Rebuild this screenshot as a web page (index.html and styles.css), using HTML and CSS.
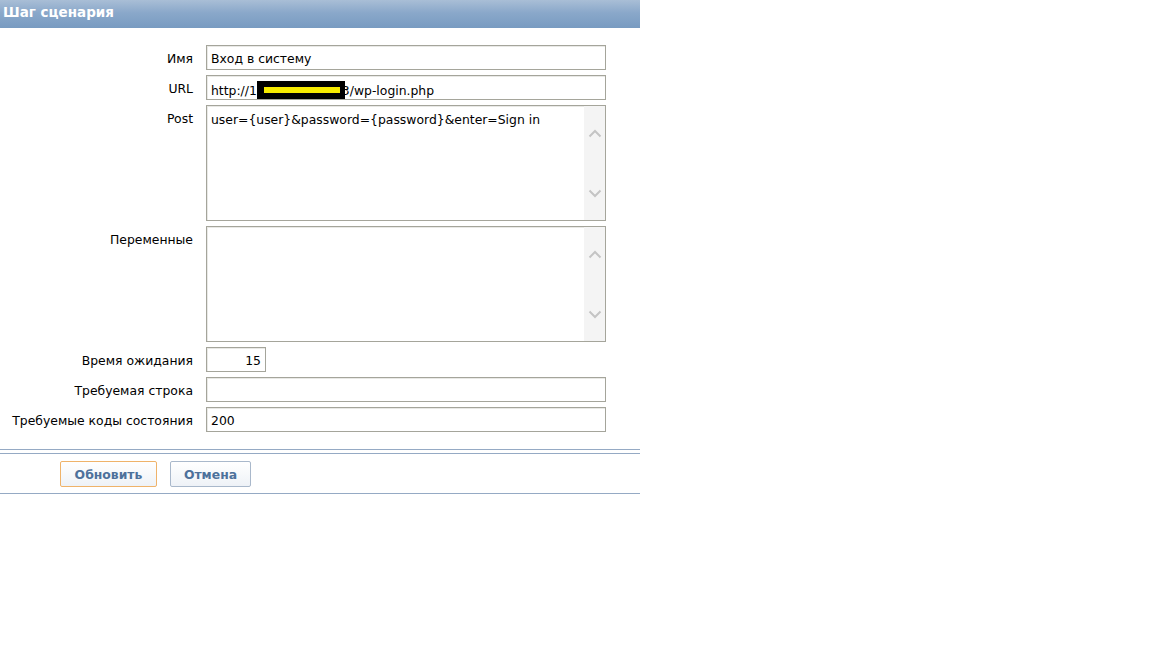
FILE: index.html
```html
<!DOCTYPE html>
<html lang="ru">
<head>
<meta charset="utf-8">
<title>Шаг сценария</title>
<link rel="stylesheet" href="styles.css">
</head>
<body>
<div class="panel">
  <div class="panel-head">Шаг сценария</div>
  <div class="form">
    <div class="label">Имя</div>
    <div class="field">Вход в систему</div>

    <div class="label">URL</div>
    <div class="field">http://1<span class="mask"><span class="mask-bar"></span></span>3/wp-login.php</div>

    <div class="label">Post</div>
    <div class="field area">
      <div class="area-text">user={user}&amp;password={password}&amp;enter=Sign in</div>
      <div class="scroll">
        <svg width="14" height="9" viewBox="0 0 14 9"><path d="M1.5 7.5 L7 2 L12.5 7.5" fill="none" stroke="#c4c4c4" stroke-width="2"/></svg>
        <svg width="14" height="9" viewBox="0 0 14 9"><path d="M1.5 1.5 L7 7 L12.5 1.5" fill="none" stroke="#c4c4c4" stroke-width="2"/></svg>
      </div>
    </div>

    <div class="label">Переменные</div>
    <div class="field area">
      <div class="area-text"></div>
      <div class="scroll">
        <svg width="14" height="9" viewBox="0 0 14 9"><path d="M1.5 7.5 L7 2 L12.5 7.5" fill="none" stroke="#c4c4c4" stroke-width="2"/></svg>
        <svg width="14" height="9" viewBox="0 0 14 9"><path d="M1.5 1.5 L7 7 L12.5 1.5" fill="none" stroke="#c4c4c4" stroke-width="2"/></svg>
      </div>
    </div>

    <div class="label">Время ожидания</div>
    <div class="field short">15</div>

    <div class="label">Требуемая строка</div>
    <div class="field"></div>

    <div class="label">Требуемые коды состояния</div>
    <div class="field">200</div>
  </div>
  <div class="footer">
    <button class="btn btn-main">Обновить</button>
    <button class="btn btn-cancel">Отмена</button>
  </div>
</div>
</body>
</html>
```

FILE: styles.css
```css
html, body {
  margin: 0;
  padding: 0;
  background: #ffffff;
}

body {
  font-family: "DejaVu Sans", Verdana, sans-serif;
  font-size: 12.4px;
  color: #000;
}

.panel {
  width: 640px;
}

.panel-head {
  height: 28px;
  box-sizing: border-box;
  padding: 4px 0 0 3px;
  background: linear-gradient(#a9bed6, #8aa8ca 45%, #789bc1);
  color: #ffffff;
  font-weight: bold;
  font-size: 13.5px;
  line-height: 17px;
}

.form {
  display: grid;
  grid-template-columns: 193px 400px;
  column-gap: 13px;
  row-gap: 5px;
  padding: 17px 0 17px;
}

.label {
  text-align: right;
  padding-top: 6px;
  line-height: 15px;
  white-space: nowrap;
}

.field {
  box-sizing: border-box;
  height: 25px;
  border: 1px solid #a5a59b;
  box-shadow: inset 1px 1px 0 #e9e9e6;
  padding: 5px 4px 0;
  line-height: 15px;
  white-space: nowrap;
  overflow: hidden;
}

.field.short {
  width: 60px;
  text-align: right;
  padding-right: 4px;
}

.field.area {
  height: 116px;
  display: flex;
  padding: 0;
}

.area-text {
  flex: 1;
  padding: 6px 4px 0;
}

.scroll {
  width: 21px;
  background: #f4f4f4;
  display: flex;
  flex-direction: column;
  align-items: center;
  justify-content: space-between;
  padding: 23px 0 22px;
}

.mask {
  display: inline-block;
  width: 88px;
  height: 18px;
  margin-right: -3px;
  background: #000;
  vertical-align: -4px;
  position: relative;
}

.mask-bar {
  position: absolute;
  left: 7px;
  top: 6px;
  width: 76px;
  height: 6px;
  background: #f6eb00;
}

.footer {
  border-top: 1px solid #95aac4;
  border-bottom: 1px solid #95aac4;
  padding: 11px 0 6px 60px;
  display: flex;
  gap: 13px;
  position: relative;
}

/* second rule of the double separator above the buttons */
.footer::before {
  content: "";
  position: absolute;
  left: 0;
  right: 0;
  top: 3px;
  border-top: 1px solid #95aac4;
}

.btn {
  height: 26px;
  box-sizing: border-box;
  padding: 0;
  border: 1px solid #a9b8cb;
  border-radius: 2px;
  background: linear-gradient(#ffffff, #eef2f7);
  color: #4d719b;
  font-family: "DejaVu Sans", Tahoma, sans-serif;
  font-weight: bold;
  font-size: 12.4px;
}

.btn-main {
  width: 97px;
  border-color: #efb36a;
}

.btn-cancel {
  width: 81px;
}
```
